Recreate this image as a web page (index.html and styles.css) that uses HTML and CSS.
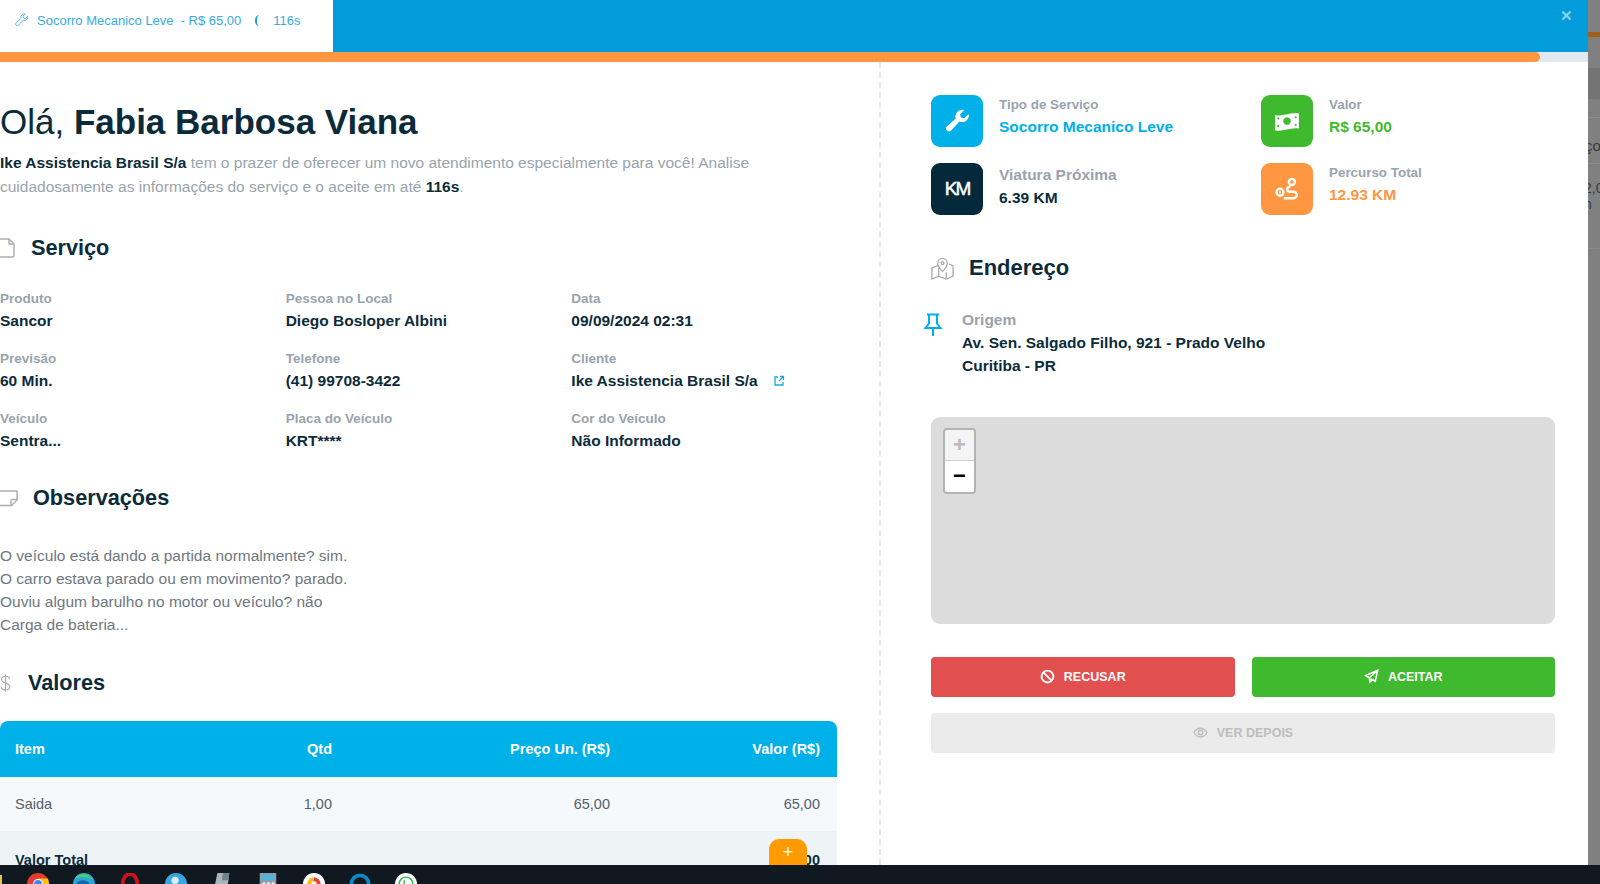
FILE: index.html
```html
<!DOCTYPE html>
<html lang="pt-BR">
<head>
<meta charset="utf-8">
<title>Novo atendimento</title>
<link rel="stylesheet" href="styles.css">
</head>
<body>
<div class="screen">
  <div class="workspace">
    <div class="modal">
      <header class="modal-head">
        <div class="tab">
          <svg class="tab-wrench" viewBox="0 0 24 24"><path d="M22 7a6 6 0 0 1-8.300 5.500l-7.500 8.400a3 3 0 0 1-4.300-4.200l8.500-7.300A6 6 0 0 1 17.500 1.500l-3.700 3.700.8 3.300 3.300.9L21.600 5.600A6 6 0 0 1 22 7z"/></svg>
          <span class="tab-name">Socorro Mecanico Leve</span>
          <span class="tab-price">- R$ 65,00</span>
          <span class="tab-spin"></span>
          <span class="tab-time">116s</span>
        </div>
        <span class="close">&#10005;</span>
      </header>
      <div class="progress"><div class="progress-fill"></div></div>
      <div class="content">
        <section class="left">
          <h1 class="hello">Olá, <strong>Fabia Barbosa Viana</strong></h1>
          <p class="intro"><strong>Ike Assistencia Brasil S/a</strong> tem o prazer de oferecer um novo atendimento especialmente para você! Analise cuidadosamente as informações do serviço e o aceite em até <strong>116s</strong>.</p>

          <h2 class="section-title title-servico">
            <svg class="sec-icon sec-file" viewBox="0 0 15 20"><path d="M-1 1h10l5 5v11.500a1.500 1.500 0 0 1-1.500 1.500H-1z"/><path d="M9 1v5h5"/></svg>
            <span>Serviço</span>
          </h2>
          <div class="fields">
            <div class="field"><span class="lbl">Produto</span><span class="val">Sancor</span></div>
            <div class="field"><span class="lbl">Pessoa no Local</span><span class="val">Diego Bosloper Albini</span></div>
            <div class="field"><span class="lbl">Data</span><span class="val">09/09/2024 02:31</span></div>
            <div class="field"><span class="lbl">Previsão</span><span class="val">60 Min.</span></div>
            <div class="field"><span class="lbl">Telefone</span><span class="val">(41) 99708-3422</span></div>
            <div class="field"><span class="lbl">Cliente</span><span class="val">Ike Assistencia Brasil S/a<svg class="ext" viewBox="0 0 12 12"><path d="M5 2H2v8h8V7"/><path d="M7 1.500h3.500V5M10.500 1.500 6 6"/></svg></span></div>
            <div class="field"><span class="lbl">Veículo</span><span class="val">Sentra...</span></div>
            <div class="field"><span class="lbl">Placa do Veículo</span><span class="val">KRT****</span></div>
            <div class="field"><span class="lbl">Cor do Veículo</span><span class="val">Não Informado</span></div>
          </div>

          <h2 class="section-title title-obs">
            <svg class="sec-icon sec-note" viewBox="0 0 18 18"><path d="M-1 2h18v9l-5.500 5.500H1a2 2 0 0 1-2-2z"/><path d="M17 10.500h-4.500a1.500 1.500 0 0 0-1.500 1.500v4.500"/></svg>
            <span>Observações</span>
          </h2>
          <p class="obs">O veículo está dando a partida normalmente? sim.<br>O carro estava parado ou em movimento? parado.<br>Ouviu algum barulho no motor ou veículo? não<br>Carga de bateria...</p>

          <h2 class="section-title title-valores">
            <svg class="sec-icon sec-dollar" viewBox="0 0 14 24"><path d="M12 7c0-2.400-2.300-3.500-5-3.500S2 4.800 2 7.500s2.300 3.600 5 4.500 5.500 2 5.500 4.700-2.500 4-5.500 4-5.500-1.300-5.500-4M7 1v22"/></svg>
            <span>Valores</span>
          </h2>
          <div class="table">
            <div class="tr thead"><span>Item</span><span class="r">Qtd</span><span class="r">Preço Un. (R$)</span><span class="r">Valor (R$)</span></div>
            <div class="tr tbody"><span>Saida</span><span class="r">1,00</span><span class="r">65,00</span><span class="r">65,00</span></div>
            <div class="tr tfoot"><span>Valor Total</span><span></span><span></span><span class="r">65,00</span></div>
            <div class="fab">+</div>
          </div>
        </section>

        <section class="right">
          <div class="stats">
            <div class="stat">
              <div class="badge b-blue"><svg viewBox="0 0 24 24"><path class="solid" d="M23 7.200a6.300 6.300 0 0 1-8.800 5.300l-7.600 8.300a2.800 2.800 0 0 1-4.100-3.800l8.300-7.300A6.300 6.300 0 0 1 18.800 1.900l-4 3.900.8 2.900 3 .7 4-3.700c.3.500.4 1 .4 1.500z"/></svg></div>
              <div class="stat-text"><span class="stat-lbl">Tipo de Serviço</span><span class="stat-val c-blue">Socorro Mecanico Leve</span></div>
            </div>
            <div class="stat">
              <div class="badge b-green"><svg viewBox="0 0 24 24"><path class="solid" fill-rule="evenodd" d="M1 6.500C8 8.500 15 3.500 23 5v14c-8-1.500-15 3.500-22 1.500zM12 8.500a3.500 3.500 0 1 0 .01 0zM4 8.500a1 1 0 1 0 .01 0zM20 7.500a1 1 0 1 0 .01 0zM4 15.500a1 1 0 1 0 .01 0zM20 14.500a1 1 0 1 0 .01 0z"/></svg></div>
              <div class="stat-text"><span class="stat-lbl">Valor</span><span class="stat-val c-green">R$ 65,00</span></div>
            </div>
            <div class="stat">
              <div class="badge b-dark"><span class="km">KM</span></div>
              <div class="stat-text stat-big"><span class="stat-lbl">Viatura Próxima</span><span class="stat-val c-dark">6.39 KM</span></div>
            </div>
            <div class="stat">
              <div class="badge b-orange"><svg viewBox="0 0 24 24"><path class="line" d="M9 20.500h9a3 3 0 0 0 0-6h-4a2.300 2.300 0 0 1 0-4.500l1-.5"/><circle class="line" cx="16.500" cy="5.500" r="2.800"/><circle class="line" cx="5.500" cy="15" r="3.200"/><circle class="solid" cx="5.500" cy="15" r="1"/></svg></div>
              <div class="stat-text"><span class="stat-lbl">Percurso Total</span><span class="stat-val c-orange">12.93 KM</span></div>
            </div>
          </div>

          <h2 class="section-title title-end">
            <svg class="sec-icon sec-map" viewBox="0 0 24 24"><path d="M7 9 1 11.500V23l7-3 8 3 7-3V9l-4-1.500"/><path d="M8 11v9M16 16v7"/><path d="M12 15s-5-4.500-5-8.500a5 5 0 0 1 10 0C17 10.500 12 15 12 15z"/><circle cx="12" cy="6.500" r="1.500"/></svg>
            <span>Endereço</span>
          </h2>
          <div class="origin">
            <svg class="pin" viewBox="0 0 18 24"><path d="M3 1.500h12M5 1.500v9L1.500 15h15L13 10.500v-9M9 15v8"/></svg>
            <div>
              <div class="origin-lbl">Origem</div>
              <div class="origin-val">Av. Sen. Salgado Filho, 921 - Prado Velho</div>
              <div class="origin-val">Curitiba - PR</div>
            </div>
          </div>
          <div class="map">
            <div class="zoom">
              <span class="zoom-btn zoom-in">+</span>
              <span class="zoom-btn zoom-out">&#8722;</span>
            </div>
          </div>
          <div class="actions">
            <button class="btn btn-red"><svg viewBox="0 0 24 24"><circle cx="12" cy="12" r="9.500"/><path d="M5.500 5.500l13 13"/></svg>RECUSAR</button>
            <button class="btn btn-green"><svg viewBox="0 0 24 24"><path d="M22 2 2.500 10.500 8.500 14l1 7 4.500-4 4 2.500zM8.500 14 22 2M9.500 21l2-6"/></svg>ACEITAR</button>
          </div>
          <button class="btn btn-later"><svg viewBox="0 0 24 24"><path d="M1.500 12S5.500 5 12 5s10.500 7 10.500 7-4 7-10.500 7S1.500 12 1.500 12z"/><circle cx="12" cy="12" r="3.500"/></svg>VER DEPOIS</button>
        </section>
      </div>
    </div>
    <aside class="backdrop">
      <div class="bk bk-a"></div>
      <div class="bk bk-b"></div>
      <div class="bk bk-c"></div>
      <div class="bk bk-g"></div>
      <div class="bk bk-d">ço</div>
      <div class="bk bk-e">2,0<br>n</div>
      <div class="bk bk-f"></div>
    </aside>
  </div>
  <footer class="taskbar">
    <span class="tb-start"></span>
    <svg class="tb" viewBox="0 0 24 24"><circle cx="12" cy="12" r="12" fill="#e33b2e"/><path d="M12 12 1.600 18l6.400 6z" fill="#2ba24c"/><path d="M12 6h10.600a12 12 0 0 1-6 16.400z" fill="#fbc116"/><circle cx="12" cy="12" r="5.500" fill="#fff"/><circle cx="12" cy="12" r="4.300" fill="#3f82f1"/></svg>
    <svg class="tb" viewBox="0 0 24 24"><circle cx="12" cy="12" r="12" fill="#2aa5d8"/><path d="M3 13c2-6 12-7 15-1 1 2-2 4-6 3 3 3 8 2 10-1a11 11 0 0 1-19 4c-1-1-1-3 0-5z" fill="#1167ad"/><path d="M2 6c4-7 15-7 20 2-5-4-15-4-20-2z" fill="#49cf74"/></svg>
    <svg class="tb" viewBox="0 0 24 24"><ellipse cx="12" cy="12" rx="8" ry="11" fill="none" stroke="#d0121e" stroke-width="4"/></svg>
    <svg class="tb" viewBox="0 0 24 24"><circle cx="12" cy="12" r="12" fill="#3aa6df"/><circle cx="11" cy="8" r="4" fill="#d8eefa"/><rect x="9.500" y="8" width="3" height="10" fill="#d8eefa"/></svg>
    <svg class="tb" viewBox="0 0 24 24"><path d="M7 0h13l-3 24H2z" fill="#aab6bb"/><path d="M13 0h7l-1 8h-7z" fill="#6f8289"/></svg>
    <svg class="tb" viewBox="0 0 24 24"><rect x="3" width="18" height="24" fill="#8f9da6"/><rect x="5" y="2" width="14" height="6" fill="#4fb4dc"/><path d="M6 10h3v3H6zM11 10h3v3h-3zM16 10h3v3h-3z" fill="#e6ebee"/></svg>
    <svg class="tb" viewBox="0 0 24 24"><circle cx="12" cy="12" r="12" fill="#fff"/><circle cx="12" cy="12" r="7" fill="#4285f4"/><path d="M12 5a7 7 0 0 1 7 7h-7z" fill="#ea4335"/><path d="M5 12a7 7 0 0 1 7-7v7z" fill="#fbbc04"/><circle cx="12" cy="12" r="3" fill="#fff"/></svg>
    <svg class="tb" viewBox="0 0 24 24"><circle cx="12" cy="12" r="9.500" fill="none" stroke="#0f86c5" stroke-width="4"/></svg>
    <svg class="tb" viewBox="0 0 24 24"><circle cx="12" cy="12" r="12" fill="#fff"/><circle cx="12" cy="12" r="7.500" fill="none" stroke="#35b558" stroke-width="1.600"/><path d="M10 8v5l4 2" fill="none" stroke="#35b558" stroke-width="1.500"/></svg>
  </footer>
</div>
</body>
</html>
```
FILE: styles.css
```css
* { box-sizing: border-box; }
html, body { margin: 0; padding: 0; height: 100%; overflow: hidden; background: #fff; }
body { font-family: "Liberation Sans", Arial, sans-serif; color: #0b2b3b; }
h1, h2, p { margin: 0; }

.screen { width: 1600px; height: 884px; display: flex; flex-direction: column; overflow: hidden; }
.workspace { height: 865px; display: flex; overflow: hidden; }
.modal { width: 1588px; display: flex; flex-direction: column; background: #fff; }

/* header */
.modal-head { height: 52px; flex: none; display: flex; justify-content: space-between; background: #029cdb; }
.tab { width: 333px; background: #fff; display: flex; align-items: center; padding: 0 0 12px 15px; color: #38ace2; font-size: 13px; }
.tab-wrench { width: 14px; height: 14px; fill: none; stroke: #4fb5e6; stroke-width: 1.500; margin-right: 8px; }
.tab-price { margin-left: 7px; }
.tab-spin { width: 8px; height: 11px; margin-left: 14px; border-left: 2.500px solid #1b9ad6; border-radius: 50%; }
.tab-time { margin-left: 10px; }
.close { color: #8fd0f0; font-size: 15px; font-weight: 700; padding: 8px 15px 0 0; line-height: 16px; }

.progress { height: 10px; flex: none; background: #e2e8f0; }
.progress-fill { width: 1540px; height: 100%; background: #ff9641; border-radius: 0 5px 5px 0; }

/* body columns */
.content { flex: 1; min-height: 0; display: flex; overflow: hidden; }
.left { width: 881px; flex: none; padding-top: 40px; border-right: 2px dashed #e5e9ee; }
.right { width: 624px; margin-left: 50px; padding-top: 33px; flex: none; }

.hello { font-size: 35px; line-height: 40px; font-weight: 400; color: #0b2b3b; }
.intro { width: 770px; margin-top: 9px; font-size: 15.500px; line-height: 23.500px; color: #99a3ad; }
.intro strong { color: #0b2b3b; }

.section-title { display: flex; align-items: center; font-size: 21.700px; line-height: 28px; font-weight: 600; color: #0b2b3b; }
.sec-icon { width: 15px; height: 20px; fill: none; stroke: #a9adb2; stroke-width: 1.400; flex: none; }
.title-servico { margin-top: 36px; gap: 16px; }
.title-obs { margin-top: 33px; gap: 15px; }
.title-valores { margin-top: 33px; gap: 17px; }
.sec-note { width: 18px; height: 18px; }
.sec-dollar { width: 11px; height: 22px; }

.fields { width: 857px; margin-top: 27px; display: grid; grid-template-columns: repeat(3, 1fr); row-gap: 18px; }
.field { display: flex; flex-direction: column; gap: 2px; }
.lbl { font-size: 13.500px; line-height: 19px; font-weight: 700; color: #99a3ad; }
.val { font-size: 15.500px; line-height: 21px; font-weight: 700; color: #0b2b3b; display: flex; align-items: center; }
.ext { width: 12px; height: 12px; margin-left: 15px; fill: none; stroke: #1ba9e0; stroke-width: 1.300; }

.obs { margin-top: 32px; font-size: 15.500px; line-height: 23px; color: #6d7780; }

/* table */
.table { width: 837px; margin-top: 24px; position: relative; font-size: 14.500px; }
.tr { display: grid; grid-template-columns: 1fr 100px 278px 210px; padding: 0 17px 0 15px; align-items: center; }
.r { text-align: right; }
.thead { height: 56px; background: #00b0e8; color: #fff; font-weight: 700; border-radius: 8px 8px 0 0; }
.tbody { height: 54px; background: #f5f9fc; color: #55606a; }
.tfoot { height: 60px; background: #eef3f6; color: #0b2b3b; font-weight: 700; align-items: start; padding-top: 21px; }
.fab { position: absolute; left: 769px; top: 118px; width: 38px; height: 38px; border-radius: 10px; background: #ff9a00; color: #fff; font-size: 18px; line-height: 26px; text-align: center; }

/* stats */
.stats { display: grid; grid-template-columns: 330px 1fr; row-gap: 16px; }
.stat { display: flex; gap: 16px; height: 52px; }
.badge { width: 52px; height: 52px; border-radius: 9px; display: flex; align-items: center; justify-content: center; }
.badge svg { width: 26px; height: 26px; }
.solid { fill: #fff; }
.line { fill: none; stroke: #fff; stroke-width: 2.200; }
.b-blue { background: #00b0e8; }
.b-green { background: #3fb92d; }
.b-dark { background: #03293a; }
.b-orange { background: #ff9641; }
.km { color: #fff; font-size: 19px; font-weight: 400; letter-spacing: -2px; -webkit-text-stroke: 0.500px #fff; }
.stat-text { display: flex; flex-direction: column; }
.stat-lbl { font-size: 13.400px; line-height: 19px; font-weight: 700; color: #99a3ad; }
.stat-val { font-size: 15.500px; line-height: 24px; font-weight: 700; margin-top: 1px; }
.stat-big { padding-top: 1px; }
.stat-big .stat-lbl { font-size: 15.500px; line-height: 21px; }
.stat-big .stat-val { color: #0b2b3b; }
.c-blue { color: #00b0e8; }
.c-green { color: #3fb92d; }
.c-orange { color: #ff9641; }

.title-end { margin-top: 39px; gap: 15px; font-size: 22px; }
.sec-map { width: 23px; height: 23px; }

.origin { display: flex; margin-top: 26px; margin-left: -8px; gap: 19px; }
.pin { width: 20px; height: 24px; fill: none; stroke: #00b0e8; stroke-width: 2; flex: none; margin-top: 5px; }
.origin-lbl { font-size: 15.500px; line-height: 23px; font-weight: 700; color: #99a3ad; }
.origin-val { font-size: 15.500px; line-height: 23.300px; font-weight: 700; color: #0b2b3b; }

.map { height: 207px; margin-top: 39px; padding: 11px 12px; background: #dcdcdc; border-radius: 9px; }
.zoom { width: 33px; border: 2px solid #b3b3b3; border-radius: 4px; display: flex; flex-direction: column; overflow: hidden; }
.zoom-btn { height: 31px; font: 700 22px/30px "Liberation Sans", Arial, sans-serif; text-align: center; background: #fff; color: #000; }
.zoom-in { background: #f4f4f4; color: #bbb; border-bottom: 1px solid #ccc; }

.actions { margin-top: 33px; display: grid; grid-template-columns: 1fr 1fr; gap: 17px; }
.btn { width: 100%; height: 40px; border: 0; border-radius: 4px; display: flex; align-items: center; justify-content: center; gap: 9px; font: 700 12.500px "Liberation Sans", Arial, sans-serif; color: #fff; }
.btn svg { width: 15px; height: 15px; fill: none; stroke: currentColor; stroke-width: 3; }
.btn-green svg { stroke-width: 2.400; }
.btn-later svg { stroke-width: 2.400; }
.btn-red { background: #e24f4f; }
.btn-green { background: #3fb92d; }
.btn-later { margin-top: 16px; background: #ebebeb; color: #bdbdbd; }

/* what shows behind the modal */
.backdrop { flex: 1; position: relative; background: #808080; overflow: hidden; font-size: 15px; color: #3a3a44; }
.bk { position: absolute; left: 0; right: 0; }
.bk-a { top: 32px; height: 5px; background: #a0601c; }
.bk-b { top: 68px; height: 31px; background: #747474; }
.bk-c { top: 117px; height: 1px; background: #8c8c8c; }
.bk-g { top: 163px; height: 1px; background: #8c8c8c; }
.bk-d { top: 137px; left: -3px; width: 40px; }
.bk-e { top: 180px; left: -4px; width: 40px; line-height: 16px; font-size: 14px; }
.bk-f { top: 248px; height: 1px; background: #8c8c8c; }

/* taskbar */
.taskbar { height: 19px; flex: none; display: flex; gap: 24px; padding: 8px 0 0 27px; background: #101820; overflow: hidden; position: relative; }
.tb-start { position: absolute; left: 0; top: 10px; width: 2px; height: 9px; background: #e8c44a; }
.tb { width: 22px; height: 22px; flex: none; }
```
